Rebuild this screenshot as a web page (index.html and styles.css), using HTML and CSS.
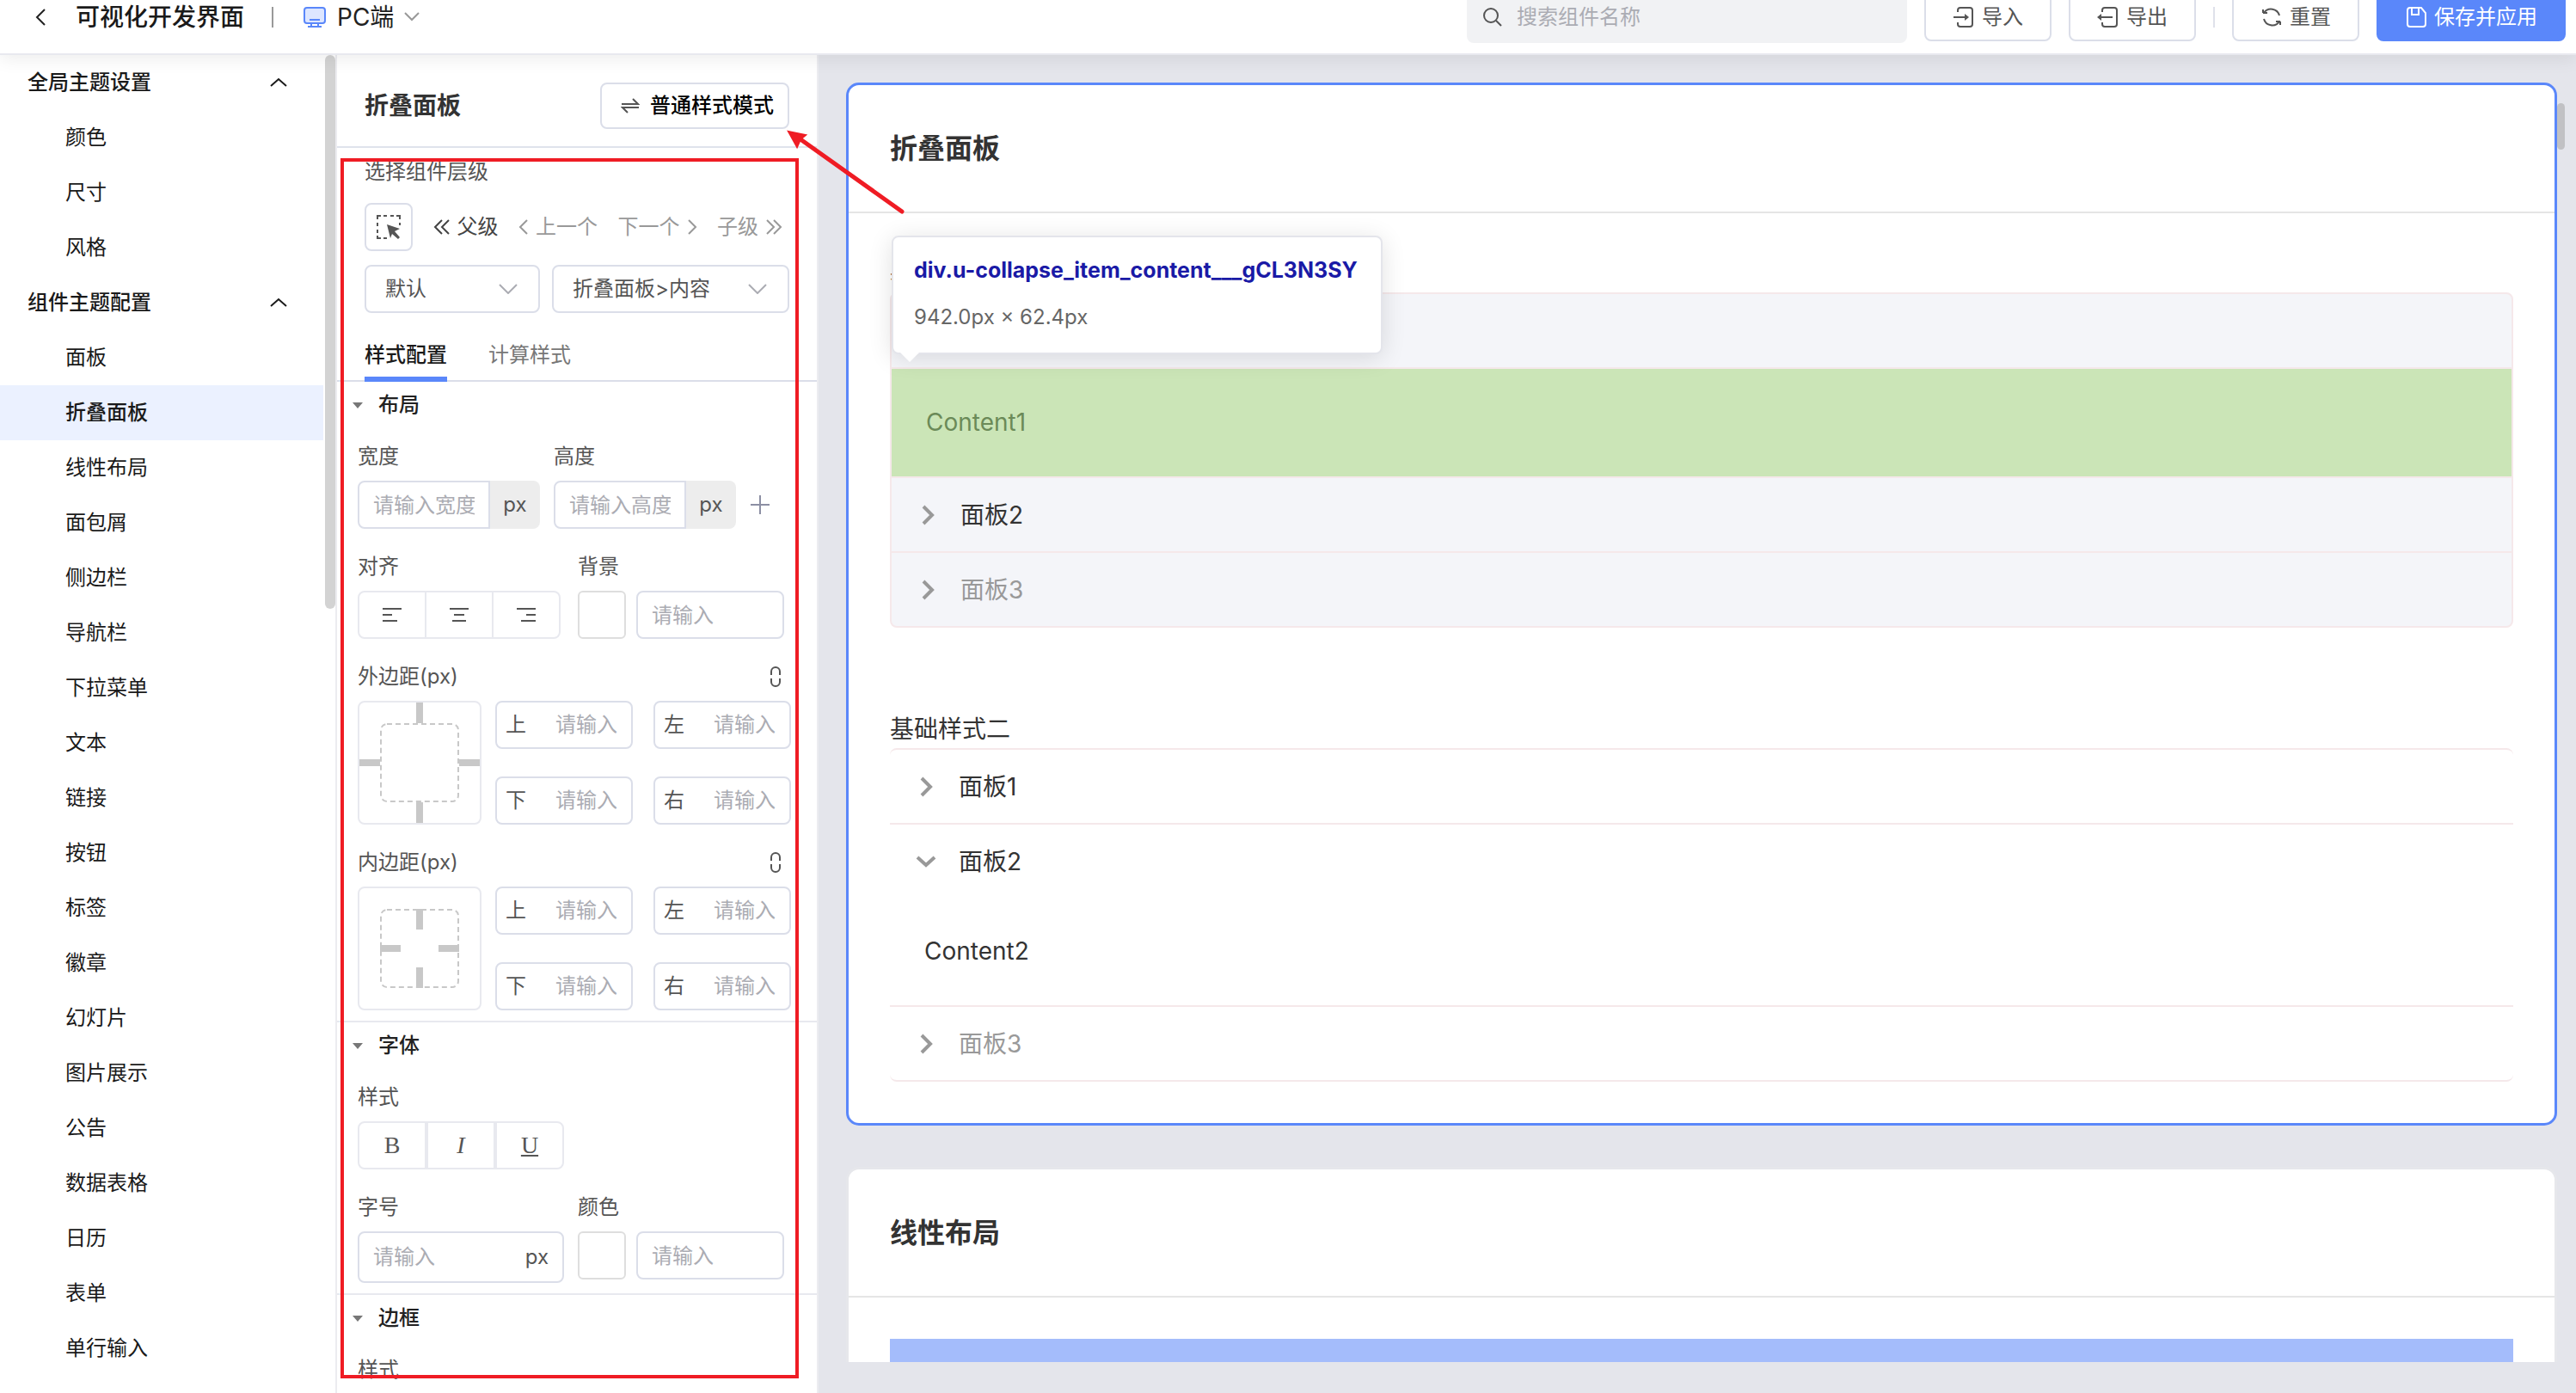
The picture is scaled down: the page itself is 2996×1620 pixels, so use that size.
FILE: index.html
```
<!DOCTYPE html>
<html lang="zh-CN">
<head>
  <meta charset="UTF-8">
  <title>可视化开发界面</title>
  <link rel="stylesheet" href="styles.css">
</head>
<body>
  <header class="header">
    <button class="back" aria-label="返回">
      <svg width="14" height="20" viewBox="0 0 14 20"><path d="M12 1L3 10l9 9"/></svg>
    </button>
    <h1 class="header-title">可视化开发界面</h1>
    <span class="divider dark"></span>
    <button class="device">
      <svg class="pc" width="28" height="26" viewBox="0 0 28 26"><rect x="2" y="2" width="24" height="18" rx="3"/><path d="M8 16h12M10 20v4M18 20v4M6 24h16"/></svg>
      PC端
      <svg class="gray" width="18" height="12" viewBox="0 0 18 12"><path d="M1 1l8 8 8-8"/></svg>
    </button>

    <label class="search">
      <svg width="24" height="24" viewBox="0 0 24 24"><circle cx="10" cy="10" r="8"/><path d="M16 16l6 6"/></svg>
      <input type="search" placeholder="搜索组件名称" aria-label="搜索组件名称">
    </label>
    <div class="actions">
      <button class="btn">
        <svg width="26" height="26" viewBox="0 0 26 26"><path d="M6 7V5a3 3 0 0 1 3-3h11a3 3 0 0 1 3 3v16a3 3 0 0 1-3 3H9a3 3 0 0 1-3-3v-2M1 13h15"/><path class="fill" d="M14 9l5 4-5 4z"/></svg>
        导入
      </button>
      <button class="btn">
        <svg width="26" height="26" viewBox="0 0 26 26"><path d="M6 7V5a3 3 0 0 1 3-3h11a3 3 0 0 1 3 3v16a3 3 0 0 1-3 3H9a3 3 0 0 1-3-3v-2M3 13h15"/><path class="fill" d="M5 9l-5 4 5 4z"/></svg>
        导出
      </button>
      <span class="divider"></span>
      <button class="btn">
        <svg width="26" height="26" viewBox="0 0 26 26"><path d="M3 8V4M3 8h5M4 8a10 10 0 0 1 18 3M23 18v4M23 18h-5M22 18a10 10 0 0 1-18-3"/></svg>
        重置
      </button>
      <button class="btn primary">
        <svg width="26" height="26" viewBox="0 0 26 26"><path d="M6 2h13l5 6v13a3 3 0 0 1-3 3H6a3 3 0 0 1-3-3V5a3 3 0 0 1 3-3zM8 2v8h8V2"/></svg>
        保存并应用
      </button>
    </div>
  </header>

  <main class="main">
    <nav class="sidebar">
      <button class="group">全局主题设置
        <svg width="20" height="12" viewBox="0 0 20 12"><path d="M1 10l9-8 9 8"/></svg>
      </button>
      <a href="#">颜色</a>
      <a href="#">尺寸</a>
      <a href="#">风格</a>
      <button class="group">组件主题配置
        <svg width="20" height="12" viewBox="0 0 20 12"><path d="M1 10l9-8 9 8"/></svg>
      </button>
      <a href="#">面板</a>
      <a href="#" class="active">折叠面板</a>
      <a href="#">线性布局</a>
      <a href="#">面包屑</a>
      <a href="#">侧边栏</a>
      <a href="#">导航栏</a>
      <a href="#">下拉菜单</a>
      <a href="#">文本</a>
      <a href="#">链接</a>
      <a href="#">按钮</a>
      <a href="#">标签</a>
      <a href="#">徽章</a>
      <a href="#">幻灯片</a>
      <a href="#">图片展示</a>
      <a href="#">公告</a>
      <a href="#">数据表格</a>
      <a href="#">日历</a>
      <a href="#">表单</a>
      <a href="#">单行输入</a>
      <span class="scroll-thumb"></span>
    </nav>

    <section class="panel">
      <div class="panel-head">
        <h2>折叠面板</h2>
        <button class="mode">
          <svg width="22" height="20" viewBox="0 0 22 20"><path d="M1 8h19l-6-6M21 12H2l6 6"/></svg>
          普通样式模式
        </button>
      </div>

      <div class="level">
        <p class="label">选择组件层级</p>
        <div class="level-nav">
          <button class="picker" aria-label="选择元素">
            <svg width="30" height="30" viewBox="0 0 30 30"><path d="M2 6V2h4M9 2h4M17 2h4M24 2h4v4M2 10v4M2 18v4M28 10v3M2 25v3h4M9 28h4"/><path class="fill" d="M13 12l15 5-6 3 6 7-2 2-7-6-2 5z"/></svg>
          </button>
          <button class="link strong">
            <svg width="20" height="18" viewBox="0 0 20 18"><path d="M10 1L2 9l8 8M18 1l-8 8 8 8"/></svg>父级
          </button>
          <button class="link">
            <svg width="12" height="18" viewBox="0 0 12 18"><path d="M10 1L2 9l8 8"/></svg>上一个
          </button>
          <button class="link">下一个
            <svg width="12" height="18" viewBox="0 0 12 18"><path d="M2 1l8 8-8 8"/></svg>
          </button>
          <button class="link">子级<svg width="20" height="18" viewBox="0 0 20 18"><path d="M2 1l8 8-8 8M10 1l8 8-8 8"/></svg>
          </button>
        </div>
        <div class="selects">
          <div class="select">
            <select aria-label="状态"><option>默认</option></select>
            <svg width="22" height="12" viewBox="0 0 22 12"><path d="M1 1l10 10L21 1"/></svg>
          </div>
          <div class="select">
            <select aria-label="组件层级"><option>折叠面板&gt;内容</option></select>
            <svg width="22" height="12" viewBox="0 0 22 12"><path d="M1 1l10 10L21 1"/></svg>
          </div>
        </div>
      </div>

      <div class="tabs">
        <button class="tab active">样式配置</button>
        <button class="tab">计算样式</button>
      </div>

      <div class="section">
        <h3>布局</h3>
        <div class="fields">
          <div class="row size">
            <div class="field">
              <label for="width">宽度</label>
              <div class="addon-input"><input id="width" type="text" placeholder="请输入宽度"><span>px</span></div>
            </div>
            <div class="field">
              <label for="height">高度</label>
              <div class="addon-input"><input id="height" type="text" placeholder="请输入高度"><span>px</span></div>
            </div>
            <button class="plus" aria-label="添加">
              <svg width="24" height="24" viewBox="0 0 24 24"><path d="M1 12h22M12 1v22"/></svg>
            </button>
          </div>
          <div class="row half">
            <div class="field">
              <p class="label">对齐</p>
              <div class="btn-group align">
                <button aria-label="左对齐"><svg width="24" height="20" viewBox="0 0 24 20"><path d="M1 3h22M1 10h11M1 17h17"/></svg></button>
                <button aria-label="居中"><svg width="24" height="20" viewBox="0 0 24 20"><path d="M1 3h22M6 10h12M4 17h16"/></svg></button>
                <button aria-label="右对齐"><svg width="24" height="20" viewBox="0 0 24 20"><path d="M1 3h22M12 10h11M6 17h17"/></svg></button>
              </div>
            </div>
            <div class="field">
              <label for="background">背景</label>
              <div class="color-input"><button class="swatch" aria-label="选择背景色"></button><input id="background" class="input" type="text" placeholder="请输入"></div>
            </div>
          </div>

          <div class="field">
            <div class="label-row">
              <p class="label">外边距(px)</p>
              <button class="chain" aria-label="联动"><svg width="14" height="24" viewBox="0 0 14 24"><path d="M2 10V6a5 5 0 0 1 10 0v4M2 14v4a5 5 0 0 0 10 0v-4"/></svg></button>
            </div>
            <div class="spacing">
              <svg class="box" viewBox="2 2 140 140"><rect x="27" y="27" width="90" height="90" rx="7"/><path d="M72 2v24M72 118v24M2 72h24M118 72h24"/></svg>
              <label class="side">上<input type="text" placeholder="请输入"></label>
              <label class="side">左<input type="text" placeholder="请输入"></label>
              <label class="side">下<input type="text" placeholder="请输入"></label>
              <label class="side">右<input type="text" placeholder="请输入"></label>
            </div>
          </div>

          <div class="field">
            <div class="label-row">
              <p class="label">内边距(px)</p>
              <button class="chain" aria-label="联动"><svg width="14" height="24" viewBox="0 0 14 24"><path d="M2 10V6a5 5 0 0 1 10 0v4M2 14v4a5 5 0 0 0 10 0v-4"/></svg></button>
            </div>
            <div class="spacing">
              <svg class="box" viewBox="2 2 140 140"><rect x="27" y="27" width="90" height="90" rx="7"/><path d="M72 26v24M72 94v24M26 72h24M94 72h24"/></svg>
              <label class="side">上<input type="text" placeholder="请输入"></label>
              <label class="side">左<input type="text" placeholder="请输入"></label>
              <label class="side">下<input type="text" placeholder="请输入"></label>
              <label class="side">右<input type="text" placeholder="请输入"></label>
            </div>
          </div>
        </div>
      </div>

      <div class="section">
        <h3>字体</h3>
        <div class="fields">
          <div class="field">
            <p class="label">样式</p>
            <div class="btn-group font">
              <button class="bold">B</button>
              <button class="italic">I</button>
              <button class="underline">U</button>
            </div>
          </div>
          <div class="row half">
            <div class="field">
              <label for="font-size">字号</label>
              <div class="suffix-input"><input id="font-size" type="text" placeholder="请输入"><span>px</span></div>
            </div>
            <div class="field">
              <label for="color">颜色</label>
              <div class="color-input"><button class="swatch" aria-label="选择颜色"></button><input id="color" class="input" type="text" placeholder="请输入"></div>
            </div>
          </div>
        </div>
      </div>

      <div class="section">
        <h3>边框</h3>
        <div class="fields">
          <p class="label">样式</p>
        </div>
      </div>

      <!-- 操作标注 -->
      <div class="mark-box"></div>
      <svg class="mark-arrow" width="140" height="104" viewBox="0 0 140 104"><path class="line" d="M16 14L134 98"/><path class="tip" d="M2 5l20 4-6 5-4 9z"/></svg>
    </section>

    <section class="canvas">
      <div class="cards">
        <article class="card selected">
          <h2 class="card-title">折叠面板</h2>
          <div class="card-body">
            <p class="demo-label">基础样式一</p>
            <div class="collapse filled">
              <button class="item-head" aria-label="面板1"></button>
              <div class="item-content inspected">
                Content1
                <div class="tooltip">
                  <strong>div.u-collapse_item_content___gCL3N3SY</strong>
                  <span>942.0px × 62.4px</span>
                </div>
              </div>
              <button class="item-head">
                <svg width="24" height="24" viewBox="0 0 24 24"><path d="M7 2l10 10L7 22"/></svg>面板2
              </button>
              <button class="item-head" disabled>
                <svg width="24" height="24" viewBox="0 0 24 24"><path d="M7 2l10 10L7 22"/></svg>面板3
              </button>
            </div>

            <p class="demo-label second">基础样式二</p>
            <div class="collapse">
              <button class="item-head">
                <svg width="24" height="24" viewBox="0 0 24 24"><path d="M7 2l10 10L7 22"/></svg>面板1
              </button>
              <button class="item-head open">
                <svg width="24" height="24" viewBox="0 0 24 24"><path d="M2 7l10 9 10-9"/></svg>面板2
              </button>
              <div class="item-content">Content2</div>
              <button class="item-head" disabled>
                <svg width="24" height="24" viewBox="0 0 24 24"><path d="M7 2l10 10L7 22"/></svg>面板3
              </button>
            </div>
          </div>
        </article>

        <article class="card">
          <h2 class="card-title">线性布局</h2>
          <div class="card-body">
            <div class="linear-block"></div>
          </div>
        </article>
      </div>
      <span class="scroll-thumb"></span>
    </section>
  </main>
</body>
</html>
```
FILE: styles.css
```
* {
  box-sizing: border-box;
}

body {
  margin: 0;
  height: 100vh;
  overflow: hidden;
  display: flex;
  flex-direction: column;
  font-family: Inter, "Noto Sans CJK SC", sans-serif;
  font-size: 24px;
  line-height: 32px;
  color: #555;
}

h1, h2, h3, p {
  margin: 0;
}

button, input, select {
  font: inherit;
  color: inherit;
}

button {
  padding: 0;
  border: none;
  background: none;
  cursor: pointer;
}

input {
  width: 100%;
  min-width: 0;
  border: none;
  outline: none;
  background: none;
}

input::placeholder {
  color: #abacb3;
  opacity: 1;
}

a {
  color: inherit;
  text-decoration: none;
}

svg {
  flex: none;
  fill: none;
  stroke: currentColor;
  stroke-width: 2;
}

svg .fill {
  fill: currentColor;
  stroke: none;
}

/* header */
.header {
  position: relative;
  z-index: 4;
  flex: none;
  display: flex;
  align-items: center;
  height: 86px;
  margin-top: -22px;
  padding: 0 12px 0 40px;
  background: #fff;
  border-bottom: 2px solid #e8e9ef;
  box-shadow: 0 4px 20px rgba(0, 0, 0, 0.08);
}

.back {
  display: flex;
  color: #222;
}

.header-title {
  margin: 0 32px 0 34px;
  font-size: 28px;
  font-weight: 500;
  color: #1a1a1a;
}

.divider {
  width: 2px;
  height: 24px;
  background: #dfe1ea;
}

.divider.dark {
  background: #999;
}

.device {
  display: flex;
  align-items: center;
  gap: 12px;
  margin-left: 34px;
  font-size: 28px;
  color: #222;
}

.pc {
  color: #5a87fa;
}

.pc rect {
  fill: #dde6ff;
}

.gray {
  color: #999;
}

.search {
  display: flex;
  align-items: center;
  gap: 14px;
  width: 512px;
  height: 60px;
  margin-left: auto;
  padding: 0 18px;
  border-radius: 8px;
  background: #f1f2f4;
}

.search input {
  flex: 1;
}

.actions {
  display: flex;
  align-items: center;
  gap: 20px;
  margin-left: 20px;
}

.btn {
  display: flex;
  justify-content: center;
  align-items: center;
  gap: 8px;
  width: 148px;
  height: 56px;
  border: 2px solid #dbdee9;
  border-radius: 8px;
}

.btn.primary {
  width: 220px;
  border-color: #5a87fa;
  background: #5a87fa;
  color: #fff;
}

/* sidebar */
.main {
  flex: 1;
  min-height: 0;
  display: flex;
}

.sidebar {
  position: relative;
  flex: none;
  width: 390px;
  padding-right: 14px;
  overflow: hidden;
  color: #1a1a1a;
  background: #fff;
}

.sidebar a,
.group {
  display: flex;
  align-items: center;
  height: 64px;
}

.sidebar a {
  padding-left: 76px;
}

.sidebar a.active {
  background: #ebf1ff;
  font-weight: 500;
}

.group {
  justify-content: space-between;
  width: 100%;
  padding: 0 42px 0 32px;
  font-weight: 500;
}

.scroll-thumb {
  position: absolute;
  top: 0;
  right: 0;
  width: 12px;
  height: 644px;
  border-radius: 6px;
  background: #d3d3d3;
}

/* style panel */
.panel {
  position: relative;
  flex: none;
  width: 562px;
  border: solid #ececf0;
  border-width: 0 2px;
  background: #fff;
  z-index: 3;
}

.panel-head {
  display: flex;
  justify-content: space-between;
  padding: 32px 32px 20px;
  border-bottom: 2px solid #dfe3ec;
}

.panel-head h2 {
  font-size: 28px;
  font-weight: 600;
  line-height: 54px;
  color: #333;
}

.mode {
  display: flex;
  justify-content: center;
  align-items: center;
  gap: 12px;
  width: 220px;
  height: 54px;
  padding-left: 6px;
  border: 2px solid #dbdee9;
  border-radius: 8px;
  font-weight: 500;
  color: #000;
}

.mode svg {
  color: #555;
}

.level {
  padding: 12px 32px 0;
}

.level-nav {
  display: flex;
  align-items: center;
  justify-content: space-between;
  margin: 20px 0 16px;
  padding-right: 8px;
}

.picker {
  display: flex;
  justify-content: center;
  align-items: center;
  width: 56px;
  height: 56px;
  border: 2px solid #dbdee9;
  border-radius: 8px;
}

.link {
  display: flex;
  align-items: center;
  gap: 8px;
  color: #999;
}

.link.strong {
  color: #444;
}

.selects {
  display: grid;
  grid-template-columns: 204px 1fr;
  gap: 14px;
}

.select {
  display: grid;
  align-items: center;
}

.select select,
.select svg {
  grid-area: 1 / 1;
}

.select select {
  width: 100%;
  height: 56px;
  padding: 0 22px;
  appearance: none;
  border: 2px solid #dbdee9;
  border-radius: 8px;
  background: #fff;
}

.select svg {
  justify-self: end;
  margin-right: 26px;
  color: #abacb3;
  pointer-events: none;
}

.tabs {
  display: flex;
  gap: 48px;
  height: 80px;
  padding: 0 32px;
  border-bottom: 2px solid #dbdee9;
}

.tab {
  margin-bottom: -2px;
  padding-top: 24px;
  border-bottom: 6px solid transparent;
  color: #777;
}

.tab.active {
  border-bottom-color: #5a87fa;
  font-weight: 500;
  color: #1a1a1a;
}

.section {
  padding: 0 30px 12px 24px;
  border-bottom: 2px solid #e8e9ef;
}

.section h3 {
  display: flex;
  align-items: center;
  gap: 18px;
  height: 54px;
  margin: 0 0 17px -6px;
  font-size: 24px;
  font-weight: 500;
  color: #222;
}

.section h3::before {
  content: "";
  border: 6px solid transparent;
  border-top: 7px solid #777;
  border-bottom: none;
}

.fields {
  display: grid;
  grid-template-columns: minmax(0, 1fr);
  gap: 28px;
}

.field {
  display: grid;
  grid-template-columns: minmax(0, 1fr);
  align-content: start;
  gap: 12px;
}

.row {
  display: grid;
  gap: 16px;
}

.row.size {
  grid-template-columns: 212px 212px 24px;
}

.row.half {
  grid-template-columns: 240px minmax(0, 1fr);
}

.addon-input {
  display: flex;
}

.addon-input input {
  flex: 1;
  height: 56px;
  padding: 0 16px;
  border: 2px solid #dbdee9;
  border-radius: 8px 0 0 8px;
}

.addon-input span {
  flex: none;
  width: 58px;
  line-height: 56px;
  text-align: center;
  border-radius: 0 8px 8px 0;
  background: #ededed;
}

.plus {
  align-self: end;
  display: flex;
  align-items: center;
  height: 56px;
  color: #8c8fa3;
}

.btn-group {
  display: flex;
}

.btn-group button {
  flex: 1;
  display: flex;
  justify-content: center;
  align-items: center;
  height: 56px;
  border: 2px solid #e8e9ef;
}

.btn-group button:first-child {
  border-radius: 8px 0 0 8px;
}

.btn-group button:last-child {
  border-radius: 0 8px 8px 0;
}

.align {
  margin-right: 4px;
}

.align button + button {
  border-left: none;
}

.font {
  width: 240px;
  font-family: "Liberation Serif", serif;
  font-size: 28px;
}

.italic {
  font-style: italic;
}

.underline {
  text-decoration: underline;
  text-underline-offset: 2px;
}

.color-input {
  display: grid;
  grid-template-columns: 56px minmax(0, 1fr);
  gap: 12px;
  padding-right: 8px;
}

.swatch {
  height: 56px;
  border: 2px solid #dedede;
  border-radius: 6px;
}

.input {
  height: 56px;
  padding: 0 16px;
  border: 2px solid #dbdee9;
  border-radius: 8px;
}

.label-row {
  display: flex;
  justify-content: space-between;
}

.chain {
  display: flex;
  justify-content: center;
  align-items: center;
  width: 36px;
}

.spacing {
  display: grid;
  grid-template-columns: 136px minmax(0, 1fr) minmax(0, 1fr);
  gap: 32px 24px;
}

.box {
  grid-row: 1 / 3;
  width: 144px;
  height: 144px;
  border: 2px solid #e8e9ef;
  border-radius: 8px;
  color: #c8c8c8;
}

.box rect {
  stroke-dasharray: 6 4;
}

.box path {
  stroke-width: 8;
}

.side {
  display: flex;
  align-items: center;
  gap: 34px;
  height: 56px;
  padding: 0 10px;
  border: 2px solid #dbdee9;
  border-radius: 8px;
}

.side input {
  flex: 1;
  padding: 0;
}

.suffix-input {
  display: flex;
  align-items: center;
  height: 60px;
  padding: 0 16px;
  border: 2px solid #dbdee9;
  border-radius: 8px;
}

.suffix-input input {
  flex: 1;
  padding: 0;
}

.mark-box {
  position: absolute;
  top: 120px;
  left: 4px;
  width: 533px;
  height: 1419px;
  border: 4px solid #ef1c24;
  pointer-events: none;
}

.mark-arrow {
  position: absolute;
  top: 84px;
  left: 523px;
  color: #ef1c24;
  pointer-events: none;
}

.mark-arrow .line {
  stroke-width: 5;
  stroke-linecap: round;
}

.mark-arrow .tip {
  fill: currentColor;
}

/* preview */
.canvas {
  position: relative;
  flex: 1;
  min-width: 0;
  padding-bottom: 36px;
  background: #e4e5eb;
}

.canvas .scroll-thumb {
  top: 56px;
  right: 13px;
  width: 9px;
  height: 54px;
  background: #c1c1c4;
}

.cards {
  display: flex;
  flex-direction: column;
  gap: 48px;
  height: 100%;
  padding: 32px 22px 0 32px;
  overflow: hidden;
}

.card {
  flex: none;
  border: 3px solid #e6e7eb;
  border-radius: 15px;
  background: #fff;
}

.card.selected {
  border-color: #5a87fa;
}

.card-title {
  padding: 0 48px;
  border-bottom: 2px solid #e5e5e5;
  font-size: 32px;
  font-weight: 600;
  line-height: 147px;
  color: #333;
}

.card-body {
  padding: 48px;
  font-size: 28px;
  color: #333;
}

.demo-label {
  line-height: 44px;
}

.demo-label.second {
  margin-top: 96px;
}

.collapse {
  border: solid #f5e8ea;
  border-width: 2px 0;
  border-radius: 8px;
}

.collapse.filled {
  border-width: 2px;
  background: #f4f5f9;
}

.item-head {
  display: flex;
  align-items: center;
  gap: 26px;
  width: 100%;
  height: 85px;
  padding: 0 30px;
}

.item-head:disabled {
  color: #999;
}

.item-head svg {
  color: #999;
  stroke-width: 4;
}

.item-head + *,
.item-content + .item-head {
  border-top: 2px solid #f5e8ea;
  height: 87px;
}

.item-content,
.item-head.open + .item-content {
  height: 125px;
  padding: 0 40px;
  line-height: 125px;
}

.item-head.open + .item-content {
  border-top: none;
}

.item-head + .item-content.inspected {
  position: relative;
  height: 127px;
  background: #cbe5b7;
  color: #6b8a58;
}

.tooltip {
  position: absolute;
  left: 0;
  bottom: calc(100% + 17px);
  display: flex;
  flex-direction: column;
  gap: 23px;
  min-width: 571px;
  padding: 22px 24px 25px;
  border: 2px solid #e4e5eb;
  border-radius: 8px;
  background: #fff;
  box-shadow: 0 4px 28px rgba(0, 0, 0, 0.12);
  font-size: 24px;
  line-height: 32px;
  color: #666;
}

.tooltip strong {
  font-size: 25px;
  font-weight: 700;
  color: #1a1aa6;
}

.tooltip::after {
  content: "";
  position: absolute;
  left: 8px;
  top: 100%;
  border: 11px solid transparent;
  border-top-color: #fff;
  border-bottom: none;
}

.linear-block {
  height: 80px;
  background: #a4bcfb;
}
```
